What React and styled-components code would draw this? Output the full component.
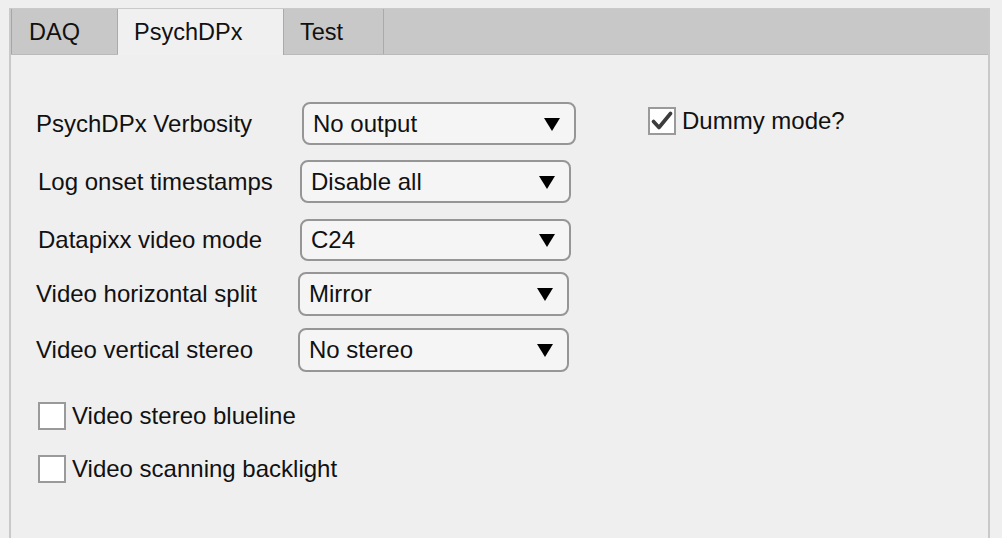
import React from 'react';
import styled, { createGlobalStyle } from 'styled-components';

const GlobalStyle = createGlobalStyle`
  html, body {
    margin: 0;
    padding: 0;
    background: #efefef;
  }
  body {
    font-family: "Liberation Sans", Arial, Helvetica, sans-serif;
    color: #111;
  }
`;

const Page = styled.div`
  width: 1002px;
  height: 538px;
  padding: 8px 0 0 9px;
  box-sizing: border-box;
  overflow: hidden;
`;

const TabGroup = styled.div`
  width: 981px;
  height: 560px;
  display: flex;
  flex-direction: column;
  border-top: 1px solid #cacaca;
  border-left: 2px solid #c9c9c9;
  border-right: 2px solid #c9c9c9;
  box-sizing: border-box;
`;

const TabBar = styled.div`
  display: flex;
  height: 46px;
  background: #c8c8c8;
  border-bottom: 1px solid #bababa;
  box-sizing: border-box;
`;

const Tab = styled.div`
  width: ${({ width }) => width}px;
  height: ${({ active }) => (active ? 46 : 45)}px;
  box-sizing: border-box;
  padding-left: ${({ indent }) => indent}px;
  padding-top: 1px;
  display: flex;
  align-items: center;
  font-size: 23.5px;
  background: ${({ active }) => (active ? '#f0f0f0' : '#c8c8c8')};
  border-left: ${({ first }) => (first ? '1px solid #a6a6a6' : 'none')};
  border-right: 1px solid #aaaaaa;
  position: relative;
  z-index: ${({ active }) => (active ? 1 : 0)};
`;

const Content = styled.div`
  flex: 1;
  display: flex;
  background: #efefef;
`;

const LeftColumn = styled.div`
  width: 600px;
  display: flex;
  flex-direction: column;
  padding-top: 47px;
`;

const RightColumn = styled.div`
  flex: 1;
  padding-top: 52px;
`;

const Row = styled.div`
  display: flex;
  align-items: center;
  height: ${({ h }) => h}px;
  margin-top: ${({ mt }) => mt}px;
  padding-left: ${({ indent }) => indent}px;
`;

const Label = styled.div`
  width: ${({ width }) => width}px;
  font-size: 24px;
  white-space: nowrap;
`;

const Select = styled.div`
  width: ${({ width }) => width}px;
  height: 100%;
  box-sizing: border-box;
  border: 2px solid #969696;
  border-radius: 8px;
  background: #f5f5f5;
  display: flex;
  align-items: center;
  justify-content: space-between;
  padding: 0 14px 0 9px;
  font-size: 24px;
`;

const Arrow = styled.span`
  width: 0;
  height: 0;
  border-left: 8px solid transparent;
  border-right: 8px solid transparent;
  border-top: 13px solid #000;
  margin-top: 1px;
`;

const CheckRow = styled.label`
  display: flex;
  align-items: center;
  gap: 6px;
  margin-top: ${({ mt }) => mt}px;
  padding-left: ${({ indent }) => indent}px;
  font-size: 24px;
  white-space: nowrap;
`;

const Box = styled.span`
  width: 28px;
  height: 28px;
  box-sizing: border-box;
  border: 2px solid #9a9a9a;
  background: #fff;
  display: flex;
  align-items: center;
  justify-content: center;
`;

const CheckMark = () => (
  <svg width="22" height="20" viewBox="0 0 22 20">
    <path
      d="M2.5 10.5 L8 16.5 L19.5 2.5"
      fill="none"
      stroke="#3c3c3c"
      strokeWidth="3.6"
      strokeLinecap="round"
      strokeLinejoin="round"
    />
  </svg>
);

const tabs = [
  { name: 'DAQ', width: 107, indent: 17, first: true },
  { name: 'PsychDPx', width: 166, indent: 16, active: true },
  { name: 'Test', width: 100, indent: 16 },
];

const rows = [
  { label: 'PsychDPx Verbosity', value: 'No output', lx: 36, sx: 302, sw: 274, h: 43, mt: 0 },
  { label: 'Log onset timestamps', value: 'Disable all', lx: 38, sx: 300, sw: 271, h: 43, mt: 15 },
  { label: 'Datapixx video mode', value: 'C24', lx: 38, sx: 300, sw: 271, h: 42, mt: 16 },
  { label: 'Video horizontal split', value: 'Mirror', lx: 36, sx: 298, sw: 271, h: 44, mt: 11 },
  { label: 'Video vertical stereo', value: 'No stereo', lx: 36, sx: 298, sw: 271, h: 44, mt: 12 },
];

const options = [
  { label: 'Video stereo blueline', mt: 30 },
  { label: 'Video scanning backlight', mt: 25 },
];

function Checkbox({ checked, label, mt, indent }) {
  return (
    <CheckRow mt={mt} indent={indent}>
      <Box>{checked && <CheckMark />}</Box>
      {label}
    </CheckRow>
  );
}

export default function App() {
  return (
    <Page>
      <GlobalStyle />
      <TabGroup>
        <TabBar>
          {tabs.map((tab) => (
            <Tab
              key={tab.name}
              width={tab.width}
              indent={tab.indent}
              first={tab.first}
              active={tab.active}
            >
              {tab.name}
            </Tab>
          ))}
        </TabBar>
        <Content>
          <LeftColumn>
            {rows.map((row) => (
              <Row key={row.label} h={row.h} mt={row.mt} indent={row.lx - 11}>
                <Label width={row.sx - row.lx}>{row.label}</Label>
                <Select width={row.sw}>
                  {row.value}
                  <Arrow />
                </Select>
              </Row>
            ))}
            {options.map((opt) => (
              <Checkbox key={opt.label} label={opt.label} mt={opt.mt} indent={27} />
            ))}
          </LeftColumn>
          <RightColumn>
            <Checkbox checked label="Dummy mode?" mt={0} indent={37} />
          </RightColumn>
        </Content>
      </TabGroup>
    </Page>
  );
}
